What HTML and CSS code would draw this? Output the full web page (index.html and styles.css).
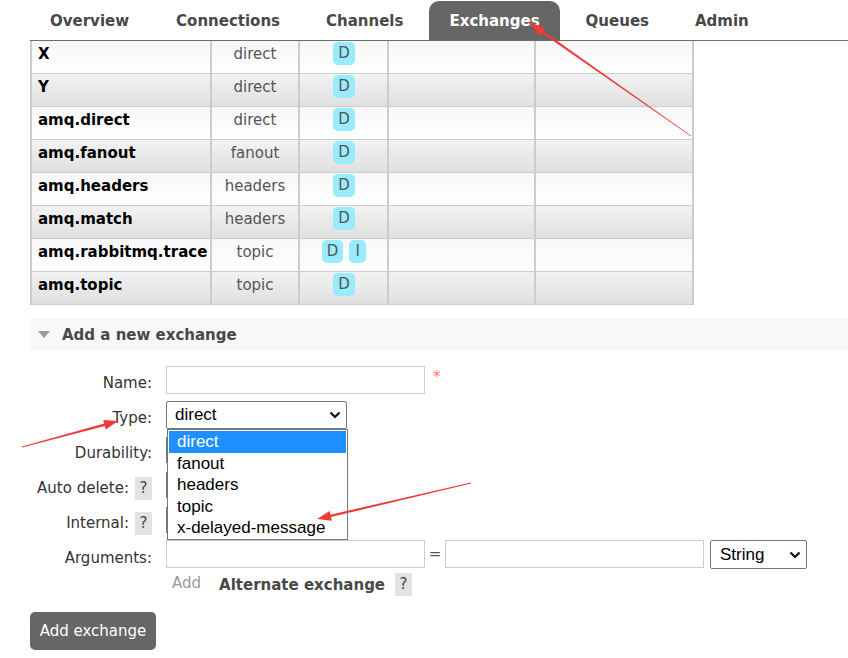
FILE: index.html
```html
<!DOCTYPE html>
<html>
<head>
<meta charset="utf-8">
<link rel="stylesheet" href="styles.css">
</head>
<body>
<div class="page">
  <nav class="tabs">
    <a class="tab">Overview</a>
    <a class="tab">Connections</a>
    <a class="tab">Channels</a>
    <a class="tab active">Exchanges</a>
    <a class="tab">Queues</a>
    <a class="tab">Admin</a>
  </nav>

  <table class="list">
    <colgroup>
      <col class="c-name"><col class="c-type"><col class="c-feat"><col class="c-in"><col class="c-out">
    </colgroup>
    <tbody>
      <tr class="alt1"><td class="name">X</td><td class="type">direct</td><td class="feat"><span class="badge">D</span></td><td></td><td></td></tr>
      <tr class="alt2"><td class="name">Y</td><td class="type">direct</td><td class="feat"><span class="badge">D</span></td><td></td><td></td></tr>
      <tr class="alt1"><td class="name">amq.direct</td><td class="type">direct</td><td class="feat"><span class="badge">D</span></td><td></td><td></td></tr>
      <tr class="alt2"><td class="name">amq.fanout</td><td class="type">fanout</td><td class="feat"><span class="badge">D</span></td><td></td><td></td></tr>
      <tr class="alt1"><td class="name">amq.headers</td><td class="type">headers</td><td class="feat"><span class="badge">D</span></td><td></td><td></td></tr>
      <tr class="alt2"><td class="name">amq.match</td><td class="type">headers</td><td class="feat"><span class="badge">D</span></td><td></td><td></td></tr>
      <tr class="alt1"><td class="name">amq.rabbitmq.trace</td><td class="type">topic</td><td class="feat"><span class="badge">D</span><span class="badge">I</span></td><td></td><td></td></tr>
      <tr class="alt2"><td class="name">amq.topic</td><td class="type">topic</td><td class="feat"><span class="badge">D</span></td><td></td><td></td></tr>
    </tbody>
  </table>

  <section class="section">
    <h2 class="section-head"><span class="tri"></span>Add a new exchange</h2>
    <div class="form">
      <div class="row">
        <div class="lbl">Name:</div>
        <div class="fld"><span class="input w-name"></span><span class="req">*</span></div>
      </div>
      <div class="row">
        <div class="lbl">Type:</div>
        <div class="fld">
          <div class="select w-type">
            <span class="sel-text">direct</span>
            <svg class="chev" width="12" height="8" viewBox="0 0 12 8"><path d="M1.5 1.5 L6 6 L10.5 1.5" fill="none" stroke="#111" stroke-width="2.2"/></svg>
          </div>
        </div>
      </div>
      <div class="row">
        <div class="lbl">Durability:</div>
        <div class="fld"><span class="select w-small"></span></div>
      </div>
      <div class="row">
        <div class="lbl">Auto delete:<span class="help">?</span></div>
        <div class="fld"><span class="select w-small"></span></div>
      </div>
      <div class="row">
        <div class="lbl">Internal:<span class="help">?</span></div>
        <div class="fld"><span class="select w-small"></span></div>
      </div>
      <div class="row">
        <div class="lbl">Arguments:</div>
        <div class="fld args">
          <span class="input w-name"></span>
          <span class="eq">=</span>
          <span class="input w-val"></span>
          <div class="select w-str">
            <span class="sel-text">String</span>
            <svg class="chev" width="12" height="8" viewBox="0 0 12 8"><path d="M1.5 1.5 L6 6 L10.5 1.5" fill="none" stroke="#111" stroke-width="2.2"/></svg>
          </div>
        </div>
      </div>
      <div class="row short">
        <div class="lbl"></div>
        <div class="fld extra">
          <span class="add">Add</span>
          <span class="alt">Alternate exchange</span>
          <span class="help">?</span>
        </div>
      </div>
    </div>
    <button class="btn">Add exchange</button>
  </section>
</div>

<ul class="dropdown">
  <li class="sel">direct</li>
  <li>fanout</li>
  <li>headers</li>
  <li>topic</li>
  <li>x-delayed-message</li>
</ul>

<svg class="annot" width="848" height="658" viewBox="0 0 848 658">
  <polygon fill="#f03a3a" points="691.2,135.8 543.2,31.0 545.4,27.9 529,22 539.6,36.1 541.8,33.0 690.8,136.2"/>
  <polygon fill="#f03a3a" points="22.1,447.4 104.8,425.9 105.8,429.5 118,421 103.2,419.9 104.2,423.5 21.9,446.6"/>
  <polygon fill="#f03a3a" points="470.9,482.6 330.4,514.7 329.6,511.0 317,519 331.8,520.8 331.0,517.1 471.1,483.4"/>
</svg>
</body>
</html>
```

FILE: styles.css
```css
* { box-sizing: border-box; }

html, body {
  margin: 0;
  padding: 0;
  background: #fff;
}

body {
  font-family: "DejaVu Sans", Verdana, sans-serif;
  font-size: 15px;
  color: #484848;
  width: 848px;
  height: 658px;
  overflow: hidden;
  position: relative;
}

.page {
  padding-left: 30px;
}

/* ---------- tabs ---------- */
.tabs {
  display: flex;
  height: 41px;
  border-bottom: 1px solid #6f6f6f;
}

.tab {
  display: block;
  margin-top: 1px;
  height: 39px;
  line-height: 40px;
  padding: 0 20px;
  margin-right: 6px;
  font-weight: bold;
  color: #484848;
  border-radius: 10px 10px 0 0;
}

.tab:nth-child(2) { margin-left: 1px; }

.tab.active {
  background: #666;
  color: #fff;
}

/* ---------- table ---------- */
.list {
  border-collapse: separate;
  border-spacing: 0;
  table-layout: fixed;
  width: 664px;
  border-left: 2px solid #cccccc;
}

.c-name { width: 180px; }
.c-type { width: 88px; }
.c-feat { width: 89px; }
.c-in { width: 147px; }
.c-out { width: 158px; }

.list td {
  height: 33px;
  padding: 4px 8px 10px;
  line-height: 18px;
  border-bottom: 1px solid #cccccc;
  border-right: 2px solid #cccccc;
  vertical-align: top;
  white-space: nowrap;
}

.list tr.alt1 td {
  background: linear-gradient(#f7f7f7, #ffffff);
}

.list tr.alt2 td {
  background: linear-gradient(#f2f2f2, #e0e0e0);
}

.list td.name {
  font-weight: bold;
  color: #000;
  padding-left: 6px;
}

.list td.type {
  text-align: center;
  color: #555;
}

.list td.feat {
  text-align: center;
  padding: 1px 0 0 1px;
}

.badge {
  display: inline-block;
  vertical-align: top;
  min-width: 17px;
  height: 23px;
  line-height: 23px;
  padding: 0 5px;
  margin: 0 3px;
  border-radius: 5px;
  background: #99ebff;
  color: #555;
  text-align: center;
}

/* ---------- section ---------- */
.section {
  margin-top: 14px;
}

.section-head {
  margin: 0;
  height: 31px;
  background: #f8f8f8;
  font-size: 15px;
  font-weight: bold;
  color: #484848;
  display: flex;
  align-items: center;
  padding-left: 8px;
}

.tri {
  width: 0;
  height: 0;
  border-left: 6px solid transparent;
  border-right: 6px solid transparent;
  border-top: 7px solid #999;
  margin-right: 12px;
}

.form {
  margin-top: 12px;
}

.row {
  display: flex;
  height: 35px;
}

.row.short {
  height: 40px;
}

.lbl {
  width: 122px;
  display: flex;
  justify-content: flex-end;
  align-items: flex-start;
  padding-top: 12px;
  line-height: 18px;
  color: #333;
}

.help {
  display: inline-block;
  width: 17px;
  height: 23px;
  line-height: 23px;
  margin-top: -2px;
  margin-left: 6px;
  background: #e2e2e2;
  color: #444;
  text-align: center;
}

.fld {
  margin-left: 14px;
  padding-top: 4px;
  display: flex;
  align-items: flex-start;
}

.input {
  display: block;
  height: 28px;
  border: 1px solid #cccccc;
  background: #fff;
}

.w-name { width: 259px; }
.w-val { width: 259px; }

.req {
  color: #f77;
  margin-left: 8px;
  margin-top: 2px;
  font-size: 15px;
}

.select {
  display: flex;
  align-items: center;
  justify-content: space-between;
  height: 28px;
  border: 1px solid #767676;
  border-radius: 2px;
  background: #fff;
  font-family: "Liberation Sans", Arial, sans-serif;
  font-size: 17px;
  color: #000;
  padding: 0 5px 0 8px;
}

.w-type { width: 181px; }
.w-small { width: 120px; }
.w-str { width: 97px; height: 29px; margin-left: 6px; padding-left: 9px; }

.chev {
  display: block;
}

.args {
  padding-top: 3px;
}

.args .eq {
  width: 20px;
  text-align: center;
  line-height: 28px;
  color: #555;
}

.extra {
  padding-top: 1px;
  align-items: center;
  height: 24px;
  padding-left: 6px;
}

.add {
  color: #999;
  margin-right: 18px;
  margin-top: -4px;
}

.alt {
  font-weight: bold;
  color: #484848;
  margin-right: 10px;
}

.extra .help {
  margin: 0;
}

.btn {
  display: block;
  margin-top: 0;
  width: 126px;
  height: 38px;
  border: 0;
  border-radius: 5px;
  background: #666;
  color: #fff;
  font-family: "DejaVu Sans", Verdana, sans-serif;
  font-size: 15px;
  padding: 0;
}

/* ---------- open dropdown list ---------- */
.dropdown {
  position: absolute;
  left: 167px;
  top: 429px;
  width: 181px;
  height: 111px;
  margin: 0;
  padding: 1px 1px 0;
  list-style: none;
  border: 1px solid #767676;
  background: #fff;
  font-family: "Liberation Sans", Arial, sans-serif;
  font-size: 17px;
  color: #000;
}

.dropdown li {
  height: 21.5px;
  line-height: 21px;
  padding-left: 8px;
}

.dropdown li.sel {
  background: #1e90ff;
  color: #fff;
}

/* ---------- annotations ---------- */
.annot {
  position: absolute;
  left: 0;
  top: 0;
  pointer-events: none;
}
```
